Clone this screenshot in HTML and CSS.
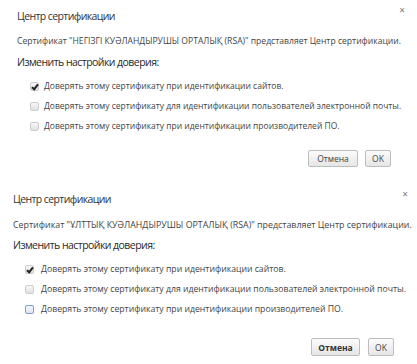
FILE: index.html
```html
<!DOCTYPE html>
<html lang="ru">
<head>
<meta charset="utf-8">
<title>Центр сертификации</title>
<link rel="stylesheet" href="styles.css">
</head>
<body>
<section class="dialog dialog--one">
  <span class="close">×</span>
  <h1 class="title">Центр сертификации</h1>
  <p class="cert">Сертификат "НЕГІЗГІ КУӘЛАНДЫРУШЫ ОРТАЛЫҚ (RSA)" представляет Центр сертификации.</p>
  <h2 class="heading">Изменить настройки доверия:</h2>
  <ul class="options">
    <li class="option"><span class="box box--checked"></span>Доверять этому сертификату при идентификации сайтов.</li>
    <li class="option"><span class="box"></span>Доверять этому сертификату для идентификации пользователей электронной почты.</li>
    <li class="option"><span class="box"></span>Доверять этому сертификату при идентификации производителей ПО.</li>
  </ul>
  <div class="actions">
    <button class="btn btn--cancel">Отмена</button>
    <button class="btn btn--ok">OK</button>
  </div>
</section>
<section class="dialog dialog--two">
  <span class="close">×</span>
  <h1 class="title">Центр сертификации</h1>
  <p class="cert">Сертификат "ҰЛТТЫҚ КУӘЛАНДЫРУШЫ ОРТАЛЫҚ (RSA)" представляет Центр сертификации.</p>
  <h2 class="heading">Изменить настройки доверия:</h2>
  <ul class="options">
    <li class="option"><span class="box box--checked"></span>Доверять этому сертификату при идентификации сайтов.</li>
    <li class="option"><span class="box"></span>Доверять этому сертификату для идентификации пользователей электронной почты.</li>
    <li class="option"><span class="box box--focus"></span>Доверять этому сертификату при идентификации производителей ПО.</li>
  </ul>
  <div class="actions">
    <button class="btn btn--cancel btn--bold">Отмена</button>
    <button class="btn btn--ok">OK</button>
  </div>
</section>
</body>
</html>
```
FILE: styles.css
```css
* { box-sizing: border-box; }
html, body { margin: 0; padding: 0; background: #fff; }
body {
  width: 417px;
  height: 364px;
  overflow: hidden;
  font-family: "Open Sans", "Noto Sans", sans-serif;
  color: #444;
}
.dialog {
  position: relative;
  display: flex;
  flex-direction: column;
  padding-left: 17px;
  padding-right: 17px;
}
.dialog--one { height: 175px; padding-top: 9px; }
.dialog--two { height: 189px; padding-top: 17px; padding-left: 13px; }
.close {
  position: absolute;
  right: 12px;
  font-size: 10px;
  line-height: 10px;
  color: #777;
}
.dialog--one .close { top: 5px; }
.dialog--two .close { top: 14px; right: 9px; }
.title {
  margin: 0;
  font-size: 10.5px;
  letter-spacing: -0.6px;
  line-height: 14px;
  font-weight: normal;
  color: #333;
}
.cert {
  margin: 12px 0 0;
  font-size: 8.6px;
  line-height: 12px;
  color: #444;
  white-space: nowrap;
}
.heading {
  margin: 8px 0 0;
  font-size: 10.5px;
  letter-spacing: -0.55px;
  line-height: 14px;
  font-weight: normal;
  color: #2a2a2a;
}
.dialog--two .cert { margin-top: 13px; font-size: 8.85px; }
.dialog--two .heading { margin-top: 7px; }
.options {
  list-style: none;
  margin: 11px 0 0;
  padding: 0 0 0 13px;
  display: flex;
  flex-direction: column;
  gap: 8px;
}
.dialog--two .options { padding-left: 12px; }
.option {
  display: flex;
  align-items: center;
  gap: 5px;
  font-size: 8.5px;
  line-height: 12px;
  color: #444;
  white-space: nowrap;
}
.dialog--two .option { gap: 7px; font-size: 8.7px; }
.box {
  width: 9px;
  height: 9px;
  border: 1px solid #cdcdcd;
  border-radius: 2px;
  background: linear-gradient(#f7f7f7, #e0e0e0);
  position: relative;
  flex: none;
}
.box--checked::after {
  content: "";
  position: absolute;
  left: 2px;
  top: 0;
  width: 2px;
  height: 5px;
  border: solid #222;
  border-width: 0 2px 2px 0;
  transform: rotate(38deg);
}
.box--focus {
  border-color: #7c9ed8;
  background: linear-gradient(#f5f7fb, #dfe5ee);
}
.actions {
  display: flex;
  justify-content: flex-end;
  gap: 7px;
  margin-top: 18px;
  padding-right: 9px;
}
.dialog--two .actions { margin-top: 23px; padding-right: 6px; gap: 8px; }
.btn {
  font-family: "Open Sans", "Noto Sans", sans-serif;
  height: 17px;
  padding: 0;
  border: 1px solid #bdbdbd;
  border-radius: 2px;
  background: linear-gradient(#fbfbfb, #e6e6e6);
  font-size: 8.5px;
  color: #444;
}
.dialog--two .btn { height: 18px; }
.btn--cancel { width: 50px; }
.btn--ok { width: 26px; }
.dialog--two .btn--cancel { width: 49px; }
.btn--bold { font-weight: bold; color: #333; }
```
